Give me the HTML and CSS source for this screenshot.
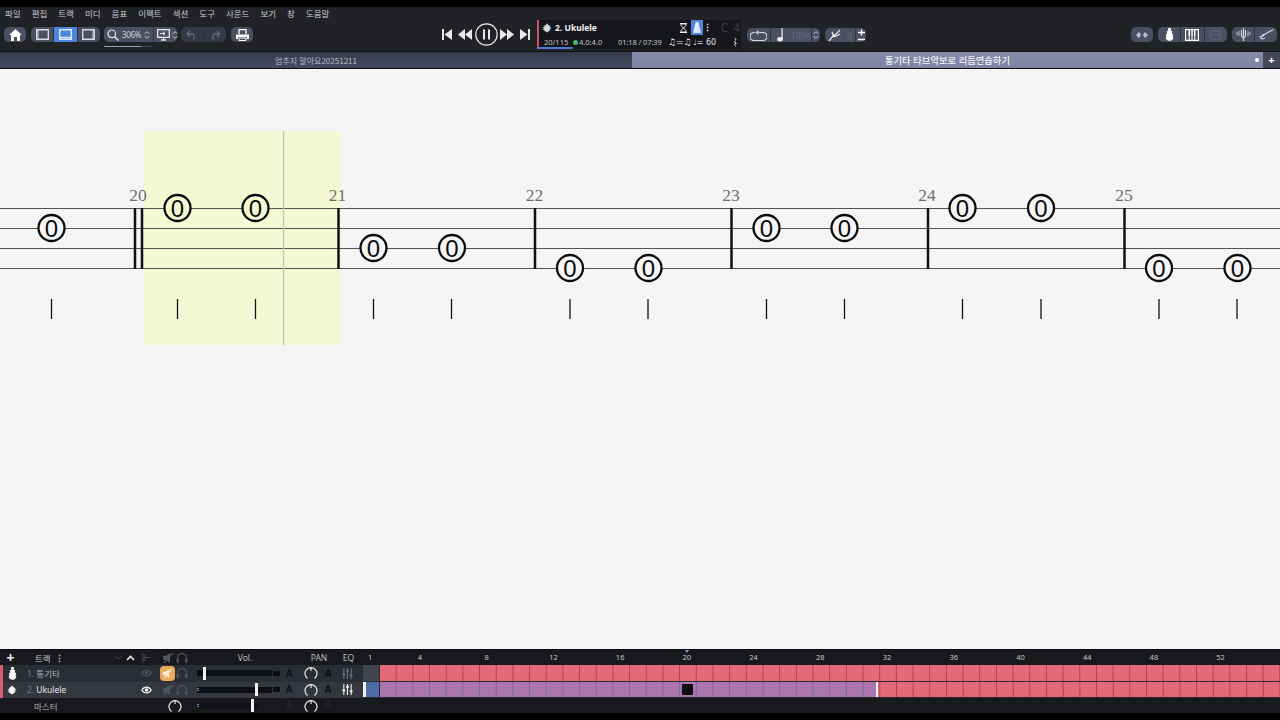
FILE: index.html
```html
<!DOCTYPE html>
<html lang="ko">

<head>
    <meta charset="UTF-8">
    <meta name="viewport" content="width=device-width, initial-scale=1.0">
    <title>Score editor</title>
    <link rel="stylesheet" href="styles.css">
</head>

<body>
    <!-- shared icons -->
    <svg class="sprite" aria-hidden="true">
        <symbol id="i-guitar" viewBox="0 0 12 14"><path d="M4.500 0h3v3l1.500.5-.5 2 1.500 1.500-.7 2 1 1.500L9 13l-3 1-3-1-1.300-2.500 1-1.500-.7-2L3.500 5.500 3 3.500 4.500 3z" fill="currentColor"/></symbol>
        <symbol id="i-uke" viewBox="0 0 12 12"><path d="M5 1h2v1.500l2 .5.500 1.500H11v1H9.500v1H11v1H9.500L9 9.500 7 10.500V11H5v-.5l-2-1L2.500 8H1V7h1.500V6H1V5h1.500L3 3l2-.5z" fill="currentColor"/></symbol>
        <symbol id="i-eye" viewBox="0 0 14 10"><path d="M1 5c3-5 9-5 12 0-3 5-9 5-12 0z" fill="none" stroke="currentColor" stroke-width="1.500"/><circle cx="7" cy="5" r="2.300" fill="currentColor"/></symbol>
        <symbol id="i-mute" viewBox="0 0 12 12"><path d="M1 4h2.500L8 1v10L3.500 8H1z" fill="currentColor"/><path d="M11 1L2 11" stroke="currentColor" stroke-width="1.200"/></symbol>
        <symbol id="i-phones" viewBox="0 0 12 12"><path d="M1.500 8V6a4.500 4.500 0 0 1 9 0v2" fill="none" stroke="currentColor" stroke-width="1.300"/><rect x=".5" y="7" width="2.500" height="4" rx="1" fill="currentColor"/><rect x="9" y="7" width="2.500" height="4" rx="1" fill="currentColor"/></symbol>
        <symbol id="i-knob" viewBox="0 0 14 14"><path d="M3.500 12.500a6 6 0 1 1 7 0" fill="none" stroke="currentColor" stroke-width="1.200"/><path d="M7 1v4" stroke="currentColor" stroke-width="1.200"/></symbol>
        <symbol id="i-eq" viewBox="0 0 12 12"><path d="M2 0v12M6 0v12M10 0v12" stroke="currentColor" stroke-width="1.200"/><path d="M.5 7h3M4.500 3h3M8.500 8h3" stroke="currentColor" stroke-width="2"/></symbol>
        <symbol id="i-updown" viewBox="0 0 8 12"><path d="M1 4.500L4 1.500l3 3M1 7.500l3 3 3-3" fill="none" stroke="currentColor" stroke-width="1.200"/></symbol>
    </svg>

    <div class="topBlack"></div>

    <nav class="menuBar">
        <span>파일</span><span>편집</span><span>트랙</span><span>미디</span><span>음표</span><span>이펙트</span>
        <span>섹션</span><span>도구</span><span>사운드</span><span>보기</span><span>창</span><span>도움말</span>
    </nav>

    <div class="toolBar">
        <div class="group btnHome">
            <div class="seg"><svg width="13" height="12" viewBox="0 0 13 12"><path d="M6.500 0L13 6h-2v6H8V8H5v4H2V6H0z" fill="#fff"/></svg></div>
        </div>
        <div class="group btnViews">
            <div class="seg"><svg width="13" height="11" viewBox="0 0 13 11"><path d="M.7.7h11.600v9.600H.7z" fill="none" stroke="#d8dae2" stroke-width="1.400"/><path d="M2 1v9" stroke="#d8dae2"/></svg></div>
            <div class="seg segActive"><svg width="13" height="11" viewBox="0 0 13 11"><path d="M.7.7h11.600v9.600H.7z" fill="none" stroke="#dfe8fa" stroke-width="1.400"/><path d="M1 8.500h11" stroke="#dfe8fa" stroke-width="1.500"/></svg></div>
            <div class="seg"><svg width="13" height="11" viewBox="0 0 13 11"><path d="M.7.7h11.600v9.600H.7z" fill="none" stroke="#d8dae2" stroke-width="1.400"/><path d="M11 1v9" stroke="#d8dae2"/></svg></div>
        </div>
        <div class="group btnZoom">
            <div class="seg zoomSeg">
                <svg width="12" height="12" viewBox="0 0 12 12"><circle cx="4.800" cy="4.800" r="3.800" fill="none" stroke="#e8e9ee" stroke-width="1.200"/><path d="M7.500 7.500L11.500 11.500" stroke="#e8e9ee" stroke-width="1.500"/></svg>
                <span class="zoomText">306%</span>
                <svg class="updown" width="6" height="10"><use href="#i-updown"/></svg>
            </div>
            <div class="seg monSeg">
                <svg width="13" height="12" viewBox="0 0 13 12"><path d="M.7.700h11.600v7.600H.7zM4 11h5M6.500 8.500V11" fill="none" stroke="#e8e9ee" stroke-width="1.300"/><path d="M3 4.500h5M6 2.800l2 1.700-2 1.700" fill="none" stroke="#e8e9ee"/></svg>
                <svg class="updown" width="6" height="10"><use href="#i-updown"/></svg>
            </div>
        </div>
        <div class="group btnUndo">
            <div class="seg"><svg width="12" height="10" viewBox="0 0 12 10"><path d="M4 1L1 4l3 3M1 4h6a3.500 3.500 0 0 1 0 5.500" fill="none" stroke="#666b7c" stroke-width="1.300"/></svg></div>
            <div class="seg"><svg width="12" height="10" viewBox="0 0 12 10"><path d="M8 1l3 3-3 3M11 4H5a3.500 3.500 0 0 0 0 5.500" fill="none" stroke="#666b7c" stroke-width="1.300"/></svg></div>
        </div>
        <div class="group btnPrint">
            <div class="seg"><svg width="13" height="12" viewBox="0 0 13 12"><path d="M3 5V.7h7V5" fill="none" stroke="#fff" stroke-width="1.300"/><path d="M0 5.500h13V10h-2V8H2v2H0z" fill="#fff"/><path d="M3 9h7v2.500H3z" fill="none" stroke="#fff"/></svg></div>
        </div>

        <div class="transport">
            <svg width="12" height="11" viewBox="0 0 12 11"><path d="M1 0h2v11H1zM11 0v11L3.500 5.500z" fill="#e8e9ee"/></svg>
            <svg class="tRew" width="14" height="11" viewBox="0 0 14 11"><path d="M7 0v11L0 5.500zM14 0v11L7 5.500z" fill="#e8e9ee"/></svg>
            <svg class="tPause" width="23" height="23" viewBox="0 0 23 23"><circle cx="11.500" cy="11.500" r="10.700" fill="none" stroke="#e8e9ee" stroke-width="1.200"/><path d="M8 6.500h2v10H8zM13 6.500h2v10h-2z" fill="#e8e9ee"/></svg>
            <svg class="tFwd" width="14" height="11" viewBox="0 0 14 11"><path d="M0 0v11l7-5.500zM7 0v11l7-5.500z" fill="#e8e9ee"/></svg>
            <svg class="tEnd" width="12" height="11" viewBox="0 0 12 11"><path d="M11 0H9v11h2zM1 0v11l7.500-5.500z" fill="#e8e9ee"/></svg>
        </div>

        <div class="infoPanel">
            <div class="infoTop">
                <svg class="infoUke" width="10" height="10"><use href="#i-uke"/></svg>
                <span class="infoTitle">2. Ukulele</span>
                <svg class="infoGlass" width="7" height="10" viewBox="0 0 7 10"><path d="M0 .5h7M0 9.500h7M1 1v1.500L3.500 5 1 7.500V9h5V7.500L3.500 5 6 2.500V1z" fill="none" stroke="#e8e9ee"/></svg>
                <div class="infoBlue"><svg width="8" height="11" viewBox="0 0 8 11"><path d="M2.700 0h2.600L8 11H0z" fill="#dfe8fa"/></svg></div>
                <span class="infoDots">⋮</span>
                <span class="infoKey">C 4</span>
            </div>
            <div class="infoBottom">
                <span class="infoBars">20/115</span>
                <span class="greenDot"></span>
                <span class="infoSig">4.0:4.0</span>
                <span class="infoTime">01:18 / 07:39</span>
                <span class="infoSwing">♫=♫</span>
                <span class="infoTempo">♩= 60</span>
                <svg class="infoClef" width="5" height="10" viewBox="0 0 5 10"><path d="M1.500 0l2 2.500-1.500 2 2 2.500H2l1 3L.7 7.500h2L1 5l1.500-2z" fill="#e4e5ea"/></svg>
            </div>
        </div>

        <div class="group btnLoop">
            <div class="seg"><svg width="17" height="11" viewBox="0 0 17 11"><path d="M5 2.500H4a4 4 0 0 0 0 8h9a4 4 0 0 0 0-8h-4" fill="none" stroke="#d8dae2" stroke-width="1.200"/><path d="M8.500 0L5.500 2.500 8.500 5z" fill="#d8dae2"/></svg></div>
            <div class="seg speedSeg">
                <svg width="8" height="14" viewBox="0 0 8 14"><path d="M5.500 0h1.200v11H5.500z" fill="#f2f2f5"/><ellipse cx="4" cy="11.300" rx="2.800" ry="2.200" fill="#f2f2f5"/></svg>
                <span class="speedText">100%</span>
            </div>
            <div class="seg stepSeg"><svg width="6" height="10"><use href="#i-updown"/></svg></div>
        </div>
        <div class="group btnPitch">
            <div class="seg pitchSeg">
                <svg width="13" height="12" viewBox="0 0 13 12"><path d="M1 12l5-6M4 3l1.500 5M6 8l6-3M4 3l2 4 6-6" fill="none" stroke="#e8e9ee" stroke-width="1.200"/></svg>
                <span class="speedText">0</span>
            </div>
            <div class="seg plusSeg">
                <svg width="7" height="12" viewBox="0 0 7 12"><path d="M0 3.500h7M3.500 .5v6M0 10.500h7" fill="none" stroke="#fff" stroke-width="1.400"/></svg>
            </div>
        </div>

        <div class="group btnMix">
            <div class="seg"><svg width="12" height="10" viewBox="0 0 12 10"><path d="M0 5l3-3 2 3-2 3zM12 5L9 2 7 5l2 3z" fill="#bfc2cf"/></svg></div>
        </div>
        <div class="group btnInst">
            <div class="seg"><svg width="11" height="13"><use href="#i-guitar"/></svg></div>
            <div class="seg"><svg width="14" height="12" viewBox="0 0 14 12"><path d="M.6.600h12.800v10.800H.6z" fill="none" stroke="#fff" stroke-width="1.200"/><path d="M3.500 1h1.500v6H3.500zM6.300 1h1.500v6H6.300zM9 1h1.500v6H9z" fill="#fff"/><path d="M4.200 7v4M7 7v4M9.800 7v4" stroke="#fff"/></svg></div>
            <div class="seg"><svg width="13" height="11" viewBox="0 0 13 11"><ellipse cx="6" cy="3.500" rx="5" ry="2" fill="none" stroke="#62677a"/><path d="M1 3.500V9c2 2 8 2 10 0V3.500M8 3l4-3" fill="none" stroke="#62677a"/></svg></div>
        </div>
        <div class="group btnTune">
            <div class="seg"><svg width="15" height="13" viewBox="0 0 15 13"><path d="M7.500 0v13M5.500 2v6c0 1 2 2 2 2s2-1 2-2V2" fill="none" stroke="#d0d3dd" stroke-width="1.200"/><path d="M3 3v5M12 3v5M1 4v3M14 4v3" stroke="#a9adbc" stroke-width="1.200"/></svg></div>
            <div class="seg"><svg width="16" height="12" viewBox="0 0 16 12"><path d="M15.500.5L7 5l-3.500 1.500M7 5l-2 2-3 1 2 2 3-1" fill="none" stroke="#d0d3dd" stroke-width="1.200"/></svg></div>
        </div>
    </div>

    <div class="tabBar">
        <div class="tab tabDim">엄추지 말아요20251211</div>
        <div class="tab tabOn">통기타 타브악보로 리듬연습하기<span class="tabDot"></span></div>
        <div class="tabPlus">+</div>
    </div>

    <main class="scoreArea">
        <svg class="scoreSvg" width="1280" height="579" viewBox="0 70 1280 579">
            <rect class="hiBar" x="144" y="131" width="196.500" height="214"/>

            <g class="staffLine">
                <path d="M0 208.500H1280M0 228.500H1280M0 248.500H1280M0 268.500H1280"/>
            </g>
            <path class="barLine" d="M135 208V269M142 208V269M338.500 208V269M535 208V269M731.500 208V269M928 208V269M1124.500 208V269"/>

            <g class="barNum">
                <text x="138" y="200.500">20</text>
                <text x="337.500" y="200.500">21</text>
                <text x="534.500" y="200.500">22</text>
                <text x="731" y="200.500">23</text>
                <text x="927" y="200.500">24</text>
                <text x="1124" y="200.500">25</text>
            </g>

            <g class="note">
                <circle cx="51.500" cy="228" r="13"/><text x="51.500" y="236.500">0</text>
                <circle class="onHi" cx="177.500" cy="208" r="13"/><text x="177.500" y="216.500">0</text>
                <circle class="onHi" cx="255.500" cy="208" r="13"/><text x="255.500" y="216.500">0</text>
                <circle cx="373.500" cy="248" r="13"/><text x="373.500" y="256.500">0</text>
                <circle cx="452" cy="248" r="13"/><text x="452" y="256.500">0</text>
                <circle cx="570" cy="268" r="13"/><text x="570" y="276.500">0</text>
                <circle cx="648.500" cy="268" r="13"/><text x="648.500" y="276.500">0</text>
                <circle cx="766.500" cy="228" r="13"/><text x="766.500" y="236.500">0</text>
                <circle cx="844.500" cy="228" r="13"/><text x="844.500" y="236.500">0</text>
                <circle cx="962.500" cy="208" r="13"/><text x="962.500" y="216.500">0</text>
                <circle cx="1041" cy="208" r="13"/><text x="1041" y="216.500">0</text>
                <circle cx="1159" cy="268" r="13"/><text x="1159" y="276.500">0</text>
                <circle cx="1237.500" cy="268" r="13"/><text x="1237.500" y="276.500">0</text>
            </g>

            <path class="stem" d="M51.500 299V319M177.500 299V319M255.500 299V319M373.500 299V319M451.500 299V319M570 299V319M648 299V319M766.500 299V319M844.500 299V319M962.500 299V319M1041 299V319M1159 299V319M1237 299V319"/>
            <path class="playHead" d="M283.500 131V345"/>
        </svg>
    </main>

    <section class="trackPanel">
        <div class="row rowHead">
            <div class="cellPlus">+</div>
            <div class="cellHeadName">
                <span class="headLabel">트랙</span><span class="headDots">⋮</span>
                <svg class="chevDim" width="9" height="5" viewBox="0 0 9 5"><path d="M1 1l3.500 3L8 1" fill="none" stroke="#34363d" stroke-width="1.300"/></svg>
                <svg class="chevUp" width="9" height="6" viewBox="0 0 9 6"><path d="M1 5l3.500-3.500L8 5" fill="none" stroke="#f0f0f2" stroke-width="1.600"/></svg>
            </div>
            <div class="cellEye"><svg width="10" height="9" viewBox="0 0 10 9"><path d="M1 0v9M3 1v7M3 4.500h6" fill="none" stroke="#4b4e57"/></svg></div>
            <div class="cellIcon dim"><svg width="12" height="12"><use href="#i-mute"/></svg></div>
            <div class="cellIcon dim"><svg width="12" height="12"><use href="#i-phones"/></svg></div>
            <div class="cellLabel cellVol">Vol.</div>
            <div class="cellLabel cellPan">PAN</div>
            <div class="cellLabel cellEq">EQ</div>
            <div class="ruler">
                <span class="rulerFirst">1</span><span>4</span><span>8</span><span>12</span><span>16</span><span>20</span><span>24</span>
                <span>28</span><span>32</span><span>36</span><span>40</span><span>44</span><span>48</span><span>52</span>
                <i class="rulerMark"></i>
            </div>
        </div>

        <div class="row rowTrack">
            <div class="cellStrip"></div>
            <div class="cellInst"><svg width="11" height="13"><use href="#i-guitar"/></svg></div>
            <div class="cellName"><b>1.</b> 통기타</div>
            <div class="cellEye dim"><svg width="11" height="8"><use href="#i-eye"/></svg></div>
            <div class="cellIcon"><div class="muteOn"><svg width="11" height="11"><use href="#i-mute"/></svg></div></div>
            <div class="cellIcon dim"><svg width="12" height="12"><use href="#i-phones"/></svg></div>
            <div class="cellSlider">
                <div class="slider"><i class="thumb thumb1"></i></div><span class="sliderEnd"></span>
            </div>
            <div class="cellA">A</div>
            <div class="cellKnob"><svg width="14" height="14"><use href="#i-knob"/></svg></div>
            <div class="cellA2">A</div>
            <div class="cellEqIcon dim"><svg width="11" height="11"><use href="#i-eq"/></svg></div>
            <div class="bars">
                <div class="barCell barGrey"></div>
                <div class="barRest barPink"></div>
            </div>
        </div>

        <div class="row rowTrack rowSel">
            <div class="cellStrip"></div>
            <div class="cellInst"><svg width="10" height="10"><use href="#i-uke"/></svg></div>
            <div class="cellName nameSel"><b>2.</b> Ukulele</div>
            <div class="cellEye"><svg width="11" height="8"><use href="#i-eye"/></svg></div>
            <div class="cellIcon dim"><svg width="12" height="12"><use href="#i-mute"/></svg></div>
            <div class="cellIcon dim"><svg width="12" height="12"><use href="#i-phones"/></svg></div>
            <div class="cellSlider">
                <div class="slider"><i class="dots"></i><i class="thumb thumb2"></i></div><span class="sliderEnd"></span>
            </div>
            <div class="cellA">A</div>
            <div class="cellKnob"><svg width="14" height="14"><use href="#i-knob"/></svg></div>
            <div class="cellA2">A</div>
            <div class="cellEqIcon"><svg width="11" height="11"><use href="#i-eq"/></svg></div>
            <div class="bars">
                <div class="barCell barBlue"></div>
                <div class="barPurple"><i class="nowCell"></i></div>
                <div class="barRest barPink barAfter"></div>
            </div>
        </div>

        <div class="row rowMaster">
            <div class="cellMasterName">마스터</div>
            <div class="cellMasterKnob"><svg width="14" height="14"><use href="#i-knob"/></svg></div>
            <div class="cellSlider">
                <div class="slider sliderMaster"><i class="dots"></i><i class="thumb thumb3"></i></div>
            </div>
            <div class="cellA faint">A</div>
            <div class="cellKnob"><svg width="14" height="14"><use href="#i-knob"/></svg></div>
            <div class="cellA2 faint">A</div>
        </div>
    </section>
</body>

</html>
```

FILE: styles.css
```css
* {
    box-sizing: border-box;
}

html,
body {
    margin: 0;
    padding: 0;
    height: 720px;
    overflow: hidden;
}

body {
    display: flex;
    flex-direction: column;
    background-color: #000;
    font-family: "Noto Sans", "Noto Sans CJK KR", sans-serif;
    color: #d6d8df;
}

.sprite {
    position: absolute;
    width: 0;
    height: 0;
}

svg {
    display: block;
    flex: none;
}

.topBlack {
    height: 7px;
    background-color: #000;
}

/* menu */
.menuBar {
    display: flex;
    gap: 11px;
    height: 13px;
    padding-left: 5px;
    align-items: center;
    background-color: #202226;
    font-family: "Noto Sans CJK KR", sans-serif;
    font-size: 8.500px;
    line-height: 13px;
    color: #c9cbd2;
    white-space: nowrap;
}

/* toolbar */
.toolBar {
    display: flex;
    align-items: flex-start;
    height: 32px;
    padding: 7px 0 0 4px;
    background-color: #202226;
    border-bottom: 1px solid #101114;
}

.group {
    display: flex;
    height: 15px;
    border-radius: 5px;
    overflow: hidden;
    background-color: #4a4f62;
}

.seg {
    display: flex;
    flex: 1;
    align-items: center;
    justify-content: center;
    border-left: 1px solid #2f3240;
}

.seg:first-child {
    border-left: none;
}

.segActive {
    background-color: #4c86dc;
}

.btnHome {
    width: 22px;
}

.btnViews {
    width: 69px;
    margin-left: 5px;
}

.btnZoom {
    width: 73px;
    margin-left: 4px;
    position: relative;
    overflow: visible;
}

.btnZoom::after {
    content: "";
    position: absolute;
    left: 0;
    top: 19px;
    width: 48px;
    height: 1px;
    background: linear-gradient(to right, #9fa2ab 0 37px, #44464e 37px);
}

.zoomSeg {
    flex: none;
    width: 49px;
    padding: 0 3px;
    justify-content: flex-start;
}

.zoomText {
    margin-left: 3px;
    font-size: 8px;
    letter-spacing: -0.300px;
    color: #cfd1d9;
}

.updown {
    margin-left: auto;
    color: #d8dae2;
}

.monSeg {
    padding: 0 4px 0 3px;
    gap: 2px;
    color: #d8dae2;
}

.btnUndo {
    width: 45px;
    margin-left: 4px;
    background-color: #353846;
}

.btnPrint {
    width: 22px;
    margin-left: 5px;
}

.transport {
    display: flex;
    align-items: center;
    height: 15px;
    margin-left: 188px;
    width: 96px;
}

.tRew {
    margin-left: 5px;
}

.tPause {
    margin-left: 2.500px;
}

.tFwd {
    margin-left: 2.500px;
}

.tEnd {
    margin-left: 5px;
}

.infoPanel {
    position: relative;
    width: 204px;
    height: 29px;
    margin-top: -7px;
    background-color: #141619;
    border-left: 2px solid #c7566a;
    white-space: nowrap;
}

.infoTop {
    display: flex;
    align-items: center;
    height: 15px;
    padding-left: 3px;
}

.infoTitle {
    flex: none;
    width: 125px;
    margin-left: 3px;
    font-family: "Noto Sans", sans-serif;
    font-size: 8.500px;
    font-weight: 700;
    color: #f2f2f4;
}

.infoBlue {
    display: flex;
    align-items: center;
    justify-content: center;
    width: 13px;
    height: 15px;
    margin-left: 4px;
    background-color: #5183d8;
}

.infoDots {
    width: 10px;
    font-size: 9px;
    line-height: 15px;
    text-align: center;
    font-weight: 700;
    color: #e8e9ee;
}

.infoKey {
    margin-left: 8px;
    font-size: 12px;
    letter-spacing: 1px;
    line-height: 15px;
    color: #3a3c43;
}

.infoBottom {
    display: flex;
    align-items: center;
    height: 14px;
    font-size: 7.500px;
    color: #c3c5cc;
}

/* blue progress under the bar count */
.infoBottom::after {
    content: "";
    position: absolute;
    left: -1px;
    top: 27px;
    width: 35px;
    height: 2px;
    border-radius: 1px;
    background-color: #4f78d8;
}

.infoBars {
    flex: none;
    width: 29px;
    margin-left: 5px;
}

.greenDot {
    flex: none;
    width: 5px;
    height: 5px;
    border-radius: 50%;
    background-color: #46b36a;
}

.infoSig {
    flex: none;
    width: 39px;
    margin-left: 1px;
}

.infoTime {
    flex: none;
    width: 50px;
    letter-spacing: -0.100px;
}

.infoSwing {
    flex: none;
    width: 25px;
    font-family: "DejaVu Sans", sans-serif;
    font-size: 9px;
    color: #f0f0f2;
}

.infoTempo {
    flex: none;
    width: 40px;
    font-family: "DejaVu Sans", sans-serif;
    font-size: 8px;
    color: #e4e5ea;
}

.btnLoop {
    width: 73px;
    margin: 1px 0 0 6px;
    height: 14px;
}

.btnLoop .seg {
    flex: none;
    width: 23px;
}

.btnLoop .speedSeg {
    width: 41px;
    padding-left: 5px;
    justify-content: flex-start;
    gap: 7px;
}

.btnLoop .stepSeg {
    width: 9px;
    color: #d8dae2;
}

.speedText {
    font-size: 8px;
    color: #666b7c;
}

.btnPitch {
    width: 41px;
    height: 14px;
    margin: 1px 0 0 5px;
}

.pitchSeg {
    flex: none;
    width: 30px;
    gap: 6px;
}

.btnMix {
    width: 22px;
    margin-left: 265px;
}

.btnInst {
    width: 69px;
    margin-left: 5px;
    color: #fff;
}

.btnTune {
    width: 45px;
    margin-left: 5px;
}

/* document tabs */
.tabBar {
    display: flex;
    height: 18px;
    background-color: #f5f5f5;
    border-bottom: 1px solid #f8f8f8;
}

.tab {
    display: flex;
    align-items: center;
    justify-content: center;
    position: relative;
    height: 17px;
    font-family: "Noto Sans CJK KR", sans-serif;
    border-bottom: 1px solid #0a0b0d;
}

.tabDim {
    width: 632px;
    font-size: 8px;
    background: linear-gradient(to bottom, #353a4b, #454a5f);
    color: #b9bcc9;
}

.tabOn {
    width: 631px;
    font-size: 9.300px;
    background: linear-gradient(to bottom, #858ca9, #7d85a4);
    color: #f2f3f7;
    font-weight: 500;
}

.tabDot {
    position: absolute;
    right: 4px;
    top: 6px;
    width: 4px;
    height: 4px;
    border-radius: 50%;
    background-color: #fff;
}

.tabPlus {
    width: 17px;
    height: 17px;
    background-color: #434859;
    border-bottom: 1px solid #0a0b0d;
    text-align: center;
    font-size: 11px;
    font-weight: 700;
    line-height: 15px;
    color: #fff;
}

/* score */
.scoreArea {
    flex: none;
    height: 579px;
    background-color: #f5f5f5;
}

.hiBar {
    fill: #f5f9d3;
}

.staffLine path {
    fill: none;
    stroke: #55554f;
    stroke-width: 1;
}

.barLine {
    fill: none;
    stroke: #111;
    stroke-width: 2.500;
}

.barNum text {
    font-family: "Liberation Serif", serif;
    font-size: 17.500px;
    fill: #6f6f6f;
    text-anchor: middle;
}

.note circle {
    fill: #f5f5f5;
    stroke: #0c0c0c;
    stroke-width: 2.300;
}

.note circle.onHi {
    fill: #f5f9d3;
}

.note text {
    font-family: "Liberation Sans", sans-serif;
    font-size: 24px;
    fill: #0c0c0c;
    text-anchor: middle;
}

.stem {
    fill: none;
    stroke: #111;
    stroke-width: 1.300;
}

.playHead {
    fill: none;
    stroke: #a9d0c2;
    stroke-width: 1.300;
}

/* track panel */
.trackPanel {
    height: 64px;
    border-top: 1px solid #0a0b0d;
    font-size: 8.500px;
}

.row {
    display: grid;
    grid-template-columns: 3px 18px 117px 22px 15px 14px 91px 20px 22px 12px 26px 3px 917px;
    align-items: center;
    white-space: nowrap;
}

.rowHead {
    height: 15px;
    background-color: #17191d;
}

.rowTrack {
    height: 16.500px;
    background-color: #2b2d34;
    color: #a8aab3;
}

.rowSel {
    background-color: #35373f;
}

.rowMaster {
    height: 15px;
    background-color: #17191d;
}

.cellPlus {
    grid-column: 1 / 3;
    font-size: 14px;
    font-weight: 700;
    line-height: 15px;
    text-align: center;
    color: #f0f0f2;
}

.cellHeadName {
    display: flex;
    align-items: center;
    padding-left: 14px;
    font-family: "Noto Sans CJK KR", sans-serif;
    color: #c9cbd2;
}

.headLabel {
    flex: none;
}

.headDots {
    flex: none;
    width: 6px;
    margin-left: 4px;
    font-weight: 700;
}

.chevDim {
    margin-left: 53px;
}

.chevUp {
    margin-left: 3px;
}

.cellEye {
    padding-left: 3px;
    color: #f4f4f6;
}

.cellIcon {
    display: flex;
    align-items: center;
    justify-content: center;
}

.dim {
    color: #50535d;
}

.cellLabel {
    text-align: center;
    color: #b9bbc3;
}

.rowHead .cellEye {
    padding-left: 4px;
}

.cellVol {
    padding-left: 21px;
}

.cellPan {
    grid-column: 8 / 11;
    padding-left: 24px;
}

.cellEq {
    grid-column: 11 / 13;
}

.ruler {
    grid-column: 13;
    display: flex;
    position: relative;
    height: 15px;
    font-size: 7.500px;
    line-height: 15px;
    color: #c9cbd2;
}

.ruler span {
    flex: none;
    width: 66.720px;
    text-align: center;
}

.ruler .rulerFirst {
    width: 23.640px;
    padding-left: 5px;
    text-align: left;
}

.rulerMark {
    position: absolute;
    left: 322px;
    top: 0;
    border-left: 2.500px solid transparent;
    border-right: 2.500px solid transparent;
    border-top: 3px solid #8a9ad8;
}

.cellStrip {
    height: 100%;
    background-color: #d95f6e;
}

.cellInst {
    display: flex;
    justify-content: center;
    color: #f4f4f6;
}

.cellName {
    padding-left: 6px;
    font-family: "Noto Sans", "Noto Sans CJK KR", sans-serif;
    color: #b5b7bf;
}

.cellName b {
    font-weight: 400;
    color: #7d7f88;
}

.nameSel {
    color: #e6e7ec;
}

.muteOn {
    display: flex;
    align-items: center;
    justify-content: center;
    width: 15px;
    height: 15px;
    border-radius: 4px;
    background-color: #e9a95c;
    color: #fbe9d2;
}

.cellSlider {
    display: flex;
    align-items: center;
    padding-left: 8px;
}

.slider {
    position: relative;
    width: 75px;
    height: 6px;
    background-color: #0c0e14;
}

.sliderEnd {
    width: 7px;
    height: 5px;
    margin-left: 1px;
    background-color: #0c0e14;
}

.sliderMaster {
    background-color: #0f1116;
    width: 62px;
}

.thumb {
    position: absolute;
    top: -3.500px;
    width: 3px;
    height: 13px;
    background-color: #f2f2f4;
}

.thumb1 {
    left: 6px;
}

.thumb2 {
    left: 58px;
}

.thumb3 {
    left: 54px;
}

/* small pan dots at the slider start */
.dots {
    position: absolute;
    left: 0;
    top: 1px;
    width: 2px;
    height: 4px;
    background: repeating-linear-gradient(to bottom, #6d86d8 0 1px, transparent 1px 2px);
}

.cellA,
.cellA2 {
    font-family: "Liberation Sans", sans-serif;
    font-size: 10px;
    font-weight: 700;
    text-align: center;
    color: #0d0e11;
}

.cellA {
    padding-right: 2px;
}

.faint {
    color: #24262b;
}

.cellKnob {
    display: flex;
    justify-content: center;
    color: #e8e9ee;
}

.cellEqIcon {
    display: flex;
    justify-content: center;
    padding-left: 1px;
    color: #f4f4f6;
}

.cellEqIcon.dim {
    color: #6d707b;
}

.cellMasterName {
    grid-column: 1 / 4;
    padding-left: 34px;
    font-family: "Noto Sans CJK KR", sans-serif;
    color: #b5b7bf;
}

.cellMasterKnob {
    grid-column: 4 / 7;
    display: flex;
    justify-content: flex-end;
    padding-right: 7px;
    color: #e8e9ee;
}

.rowMaster .cellSlider {
    grid-column: 7;
}

.bars {
    grid-column: 13;
    display: flex;
    height: 16.500px;
    border-bottom: 1px solid #2a2c33;
}

.barCell {
    flex: none;
    width: 16.680px;
    border-right: 1px solid #26282e;
}

.barGrey {
    background-color: #43454d;
}

.barBlue {
    background-color: #4d6ca6;
    border-left: 3px solid #f0f0f2;
}

.barPink,
.barPurple {
    background-size: 16.680px 100%;
}

.barPink {
    flex: 1;
    background-color: #e46a7a;
    background-image: linear-gradient(to right, transparent 0 15.680px, #b04052 15.680px 16.680px);
}

.barPurple {
    position: relative;
    flex: none;
    width: 498px;
    background-color: #ab76ad;
    background-image: linear-gradient(to right, transparent 0 15.680px, #7868a8 15.680px 16.680px);
    border-right: 2px solid #f4f4f6;
}

.barAfter {
    background-position: 2.300px 0;
}

.nowCell {
    position: absolute;
    left: 302px;
    top: 2px;
    width: 11px;
    height: 11px;
    border-radius: 1px;
    background-color: #0f0e14;
}
```
